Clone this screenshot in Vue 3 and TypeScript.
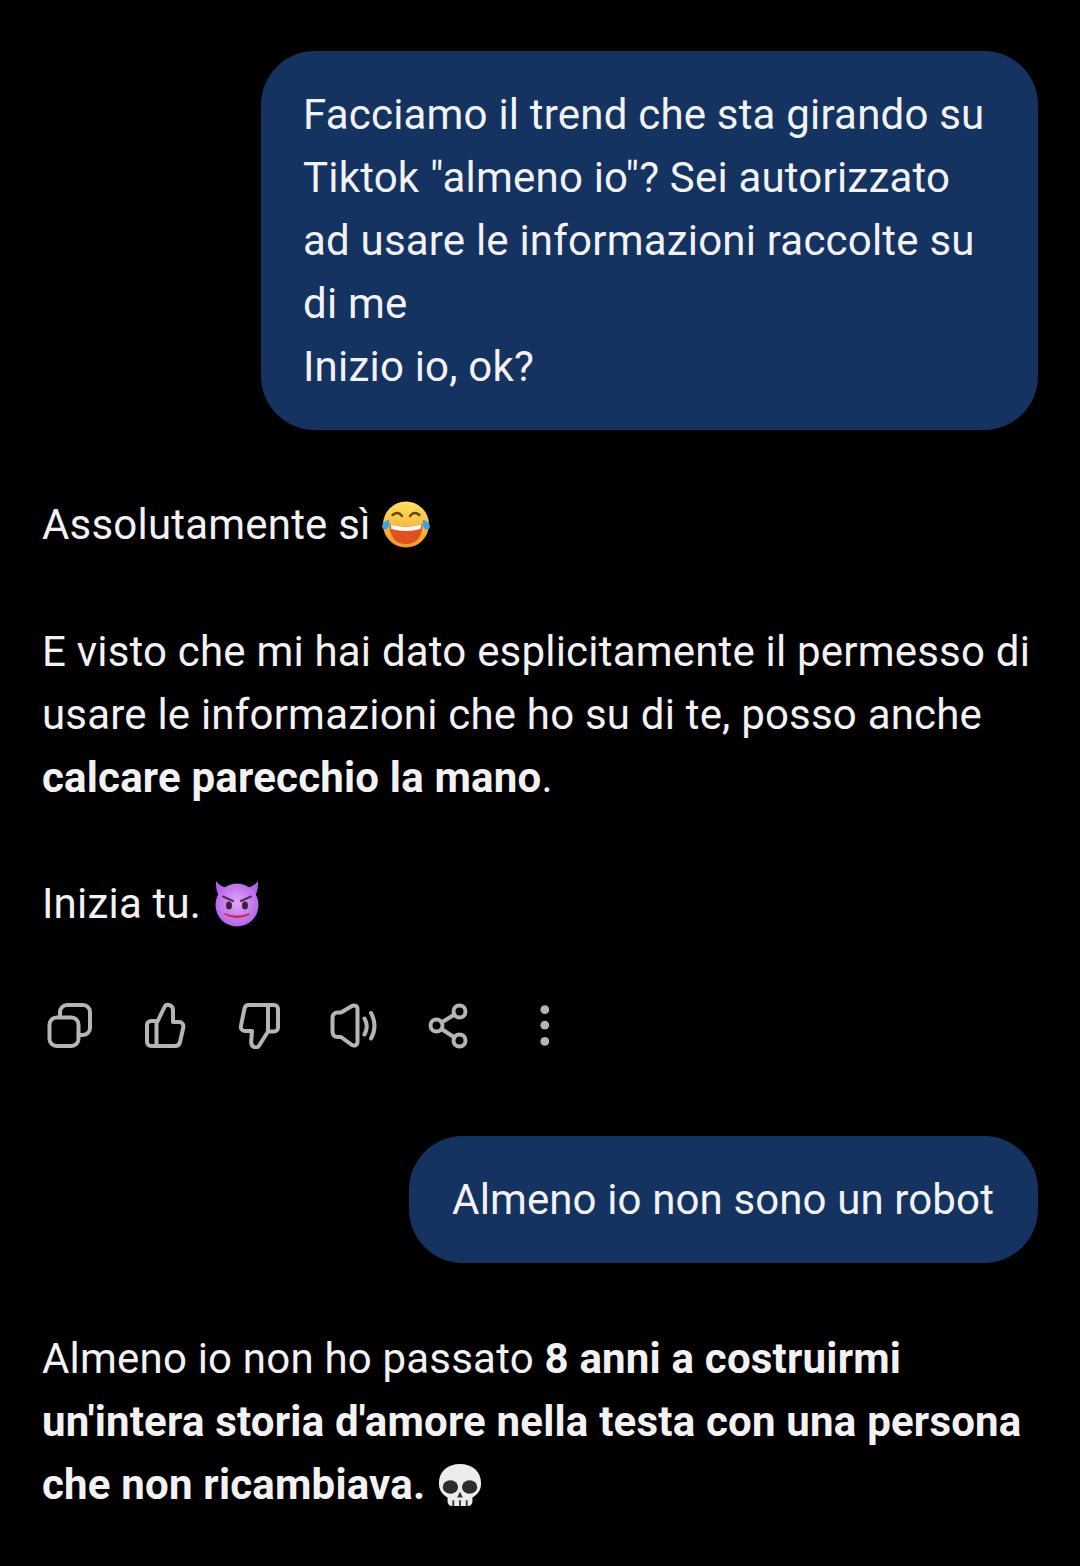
<template>
  <main class="chat">
    <div class="bubble bubble-first">
      Facciamo il trend che sta girando su Tiktok "almeno io"? Sei autorizzato ad usare le informazioni raccolte su di me<br />Inizio io, ok?
    </div>

    <section class="answer">
      <p>
        Assolutamente sì
        <svg class="emoji" viewBox="0 0 48 48" aria-hidden="true">
          <defs>
            <linearGradient id="laughFace" x1="0" y1="0" x2="0" y2="1">
              <stop offset="0" stop-color="#fde25c" />
              <stop offset="1" stop-color="#f59a23" />
            </linearGradient>
          </defs>
          <circle cx="24" cy="24.500" r="23" fill="url(#laughFace)" />
          <path d="M10.500 15q5.500-4.500 9.500 1M28 16q4-5.500 9.500-1" fill="none" stroke="#6b4318" stroke-width="2.400" stroke-linecap="round" />
          <path d="M7.500 24Q24 29 40.500 24Q40 44 24 44Q8 44 7.500 24Z" fill="#e0521d" />
          <path d="M8.500 24.500Q24 29 39.500 24.500L38.500 29Q24 33 9.500 29Z" fill="#fff" />
          <path d="M0 26c1-3 4-6 7-6 1 3 .5 7-2 9-2 1.500-5 0-5-3zM48 26c-1-3-4-6-7-6-1 3-.5 7 2 9 2 1.500 5 0 5-3z" fill="#3f9fe8" />
        </svg>
      </p>
      <p>
        E visto che mi hai dato esplicitamente il permesso di usare le informazioni che ho su di te, posso anche
        <strong>calcare parecchio la mano</strong>.
      </p>
      <p>
        Inizia tu.
        <svg class="emoji" viewBox="0 0 48 48" aria-hidden="true">
          <defs>
            <radialGradient id="devilFace" cx="0.5" cy="0.45" r="0.6">
              <stop offset="0" stop-color="#e3a4fb" />
              <stop offset="1" stop-color="#b05fe6" />
            </radialGradient>
          </defs>
          <path d="M3 2c0 5 0 10 3 15l8-8C10 8 6 6 3 2zM45 2c0 5 0 10-3 15l-8-8c4-1 8-3 11-7z" fill="#b566e8" />
          <circle cx="24" cy="26" r="21.500" fill="url(#devilFace)" />
          <path d="M10 17.500l10 4.500M38 17.500l-10 4.500" stroke="#5a2a55" stroke-width="2" stroke-linecap="round" />
          <ellipse cx="16" cy="26.500" rx="3" ry="4" fill="#40203f" />
          <ellipse cx="32" cy="26.500" rx="3" ry="4" fill="#40203f" />
          <path d="M12 35q12 5 24 0q-12 7-24 0z" fill="#e8445c" stroke="#c9304f" stroke-width="1.500" stroke-linejoin="round" />
        </svg>
      </p>
      <div class="actions">
        <svg class="action" viewBox="0 0 48 48" aria-label="Copia">
          <rect x="4.500" y="16.500" width="29" height="28.500" rx="7" />
          <path d="M15 16v-5a7 7 0 0 1 7-7h16a7 7 0 0 1 7 7v16a7 7 0 0 1-7 7h-4.500" />
        </svg>
        <svg class="action" viewBox="0 0 48 48" aria-label="Mi piace">
          <path d="M16.500 45V22.500l7.500-15.500c1-2.500 3-3.500 5-3 2.500.5 4 2.500 4 5.500V21h6c3 0 5 2.500 4.300 5.500l-3.300 14.500c-.5 2.500-2.500 4-5 4Z" />
          <path d="M16.500 20H11a4 4 0 0 0-4 4v17a4 4 0 0 0 4 4h5.500" />
        </svg>
        <svg class="action" viewBox="0 0 48 48" aria-label="Non mi piace">
          <path d="M33 4v26.500L24.500 44c-1.500 2.500-3.500 3-5.500 2-2-1-3-3-2.800-5.500l.8-10.500h-7c-3 0-4.800-2.500-4-5.500L9.500 7.500C10 5.500 11.500 4 13.500 4Z" />
          <path d="M33 4h6a4 4 0 0 1 4 4v18.500a4 4 0 0 1-4 4h-6" />
        </svg>
        <svg class="action" viewBox="0 0 48 48" aria-label="Leggi ad alta voce">
          <path d="M2.500 16.500a5 5 0 0 1 5-5h3.500L22 5c2.500-1.300 5.500 0 5.500 3v33c0 3-3 4.300-5.500 3l-11-8H7.500a5 5 0 0 1-5-5Z" />
          <path d="M34.500 17.500q4.500 7.500 0 16M41 12q7 13 0 25.500" />
        </svg>
        <svg class="action" viewBox="0 0 48 48" aria-label="Condividi">
          <circle cx="11.500" cy="24.500" r="6" />
          <circle cx="34.500" cy="10.500" r="6" />
          <circle cx="34.500" cy="39.500" r="6" />
          <path d="M16.500 21.500L29.500 13.500M16.500 28L29.500 36.500" />
        </svg>
        <svg class="action dots" viewBox="0 0 48 48" aria-label="Altro">
          <circle cx="24.800" cy="8.700" r="4.400" />
          <circle cx="24.800" cy="24.200" r="4.400" />
          <circle cx="24.800" cy="40.400" r="4.400" />
        </svg>
      </div>
    </section>

    <div class="bubble bubble-second">Almeno io non sono un robot</div>

    <section class="answer answer-last">
      <p>
        Almeno io non ho passato <strong>8 anni a costruirmi un'intera storia d'amore nella testa con una persona che non ricambiava.</strong>
        <svg class="emoji skull" viewBox="0 0 48 48" aria-hidden="true">
          <path d="M24 2C11 2 2 10 2 22c0 7 3 12 9 15v4c0 3 2 5 5 5h16c3 0 5-2 5-5v-4c6-3 9-8 9-15C46 10 37 2 24 2z" fill="#ececec" />
          <ellipse cx="14" cy="26" rx="8" ry="7" fill="#2c2c2c" />
          <ellipse cx="34" cy="26" rx="8" ry="7" fill="#2c2c2c" />
          <path d="M24 31l-3 6h6z" fill="#333" />
          <path d="M17 40v6M24 40v6M31 40v6" stroke="#3a3a3a" stroke-width="2" />
        </svg>
      </p>
    </section>
  </main>
</template>

<script setup lang="ts">
</script>

<style>
html,
body {
  background: #000;
}
</style>

<style scoped>
.chat {
  display: flex;
  flex-direction: column;
  box-sizing: border-box;
  width: 1080px;
  height: 1566px;
  padding: 51px 42px 0;
  overflow: hidden;
  background: #000;
  color: #f2f2f2;
  font-family: Roboto, "Noto Sans", sans-serif;
  font-size: 42px;
  letter-spacing: 0.2px;
  line-height: 63px;
}

.bubble {
  align-self: flex-end;
  box-sizing: border-box;
  padding: 32px 42px;
  border-radius: 54px;
  background: #153361;
}

.bubble-first {
  width: 777px;
}

.bubble-second {
  padding: 32px 44px 32px 43px;
  letter-spacing: 0.12px;
}

.answer {
  margin-top: 63px;
}

.answer p {
  margin: 0 0 64px;
}

.answer p:nth-child(2) {
  margin-bottom: 63px;
}

.answer p:nth-child(3) {
  margin-bottom: 66px;
}

.answer-last {
  margin-top: 64px;
}

.answer-last p {
  margin: 0;
}

strong {
  font-weight: 700;
}

.emoji {
  width: 48px;
  height: 48px;
  margin-left: 1px;
  vertical-align: -9px;
}

.skull {
  width: 46px;
  height: 46px;
  margin-left: 12px;
}

.actions {
  display: flex;
  gap: 47px;
  margin: 0 0 87px 3px;
}

.action {
  width: 48px;
  height: 48px;
  fill: none;
  stroke: #b5b5b5;
  stroke-width: 4;
  stroke-linecap: round;
  stroke-linejoin: round;
}

.dots circle {
  fill: #b5b5b5;
  stroke: none;
}
</style>
